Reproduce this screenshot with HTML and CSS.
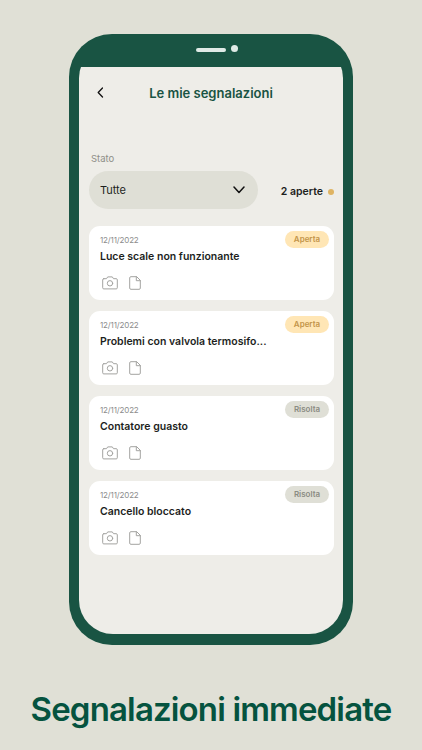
FILE: index.html
```
<!DOCTYPE html>
<html lang="it">
<head>
    <meta charset="UTF-8">
    <meta name="viewport" content="width=device-width, initial-scale=1.0">
    <title>Le mie segnalazioni</title>
    <link rel="stylesheet" href="styles.css">
</head>
<body>
    <svg class="sprite" width="0" height="0">
        <symbol id="camera" viewBox="0 0 16 14">
            <path d="M1.800 2.700h2.700L5.700.9h4.600l1.200 1.800h2.700a1.100 1.100 0 0 1 1.100 1.100v8a1.100 1.100 0 0 1-1.100 1.100H1.800a1.100 1.100 0 0 1-1.100-1.100v-8a1.100 1.100 0 0 1 1.100-1.100z"/>
            <circle cx="8" cy="7.300" r="2.700"/>
        </symbol>
        <symbol id="file" viewBox="0 0 12 14">
            <path d="M7.300.7H1.900A1.200 1.200 0 0 0 .7 1.900v10.200a1.200 1.200 0 0 0 1.200 1.200h8.200a1.200 1.200 0 0 0 1.200-1.200V4.700zM7.300.7v4h4"/>
        </symbol>
    </svg>

    <div class="phone">
        <div class="screen">
            <div class="notch">
                <span class="speaker"></span>
                <span class="lens"></span>
            </div>

            <header class="header">
                <svg class="back" width="7" height="11" viewBox="0 0 7 11"><path d="M5.500 1 1.200 5.500l4.300 4.500"/></svg>
                <h1 class="title">Le mie segnalazioni</h1>
            </header>

            <div class="filter">
                <div class="label">Stato</div>
                <div class="filter-row">
                    <div class="select">
                        <span>Tutte</span>
                        <svg width="12" height="8" viewBox="0 0 12 8"><path d="M1 1l5 5.500L11 1"/></svg>
                    </div>
                    <div class="count"><span class="count-text">2 aperte</span><span class="dot"></span></div>
                </div>
            </div>

            <div class="list">
                <div class="card">
                    <span class="badge open">Aperta</span>
                    <div class="date">12/11/2022</div>
                    <div class="name">Luce scale non funzionante</div>
                    <div class="icons">
                        <svg width="16" height="14"><use href="#camera"/></svg>
                        <svg width="12" height="14"><use href="#file"/></svg>
                    </div>
                </div>
                <div class="card">
                    <span class="badge open">Aperta</span>
                    <div class="date">12/11/2022</div>
                    <div class="name">Problemi con valvola termosifo...</div>
                    <div class="icons">
                        <svg width="16" height="14"><use href="#camera"/></svg>
                        <svg width="12" height="14"><use href="#file"/></svg>
                    </div>
                </div>
                <div class="card">
                    <span class="badge closed">Risolta</span>
                    <div class="date">12/11/2022</div>
                    <div class="name">Contatore guasto</div>
                    <div class="icons">
                        <svg width="16" height="14"><use href="#camera"/></svg>
                        <svg width="12" height="14"><use href="#file"/></svg>
                    </div>
                </div>
                <div class="card">
                    <span class="badge closed">Risolta</span>
                    <div class="date">12/11/2022</div>
                    <div class="name">Cancello bloccato</div>
                    <div class="icons">
                        <svg width="16" height="14"><use href="#camera"/></svg>
                        <svg width="12" height="14"><use href="#file"/></svg>
                    </div>
                </div>
            </div>
        </div>
    </div>

    <h2 class="caption">Segnalazioni immediate</h2>
</body>
</html>
```
FILE: styles.css
```
* {
    box-sizing: border-box;
}
body {
    margin: 0;
    height: 750px;
    padding-top: 34px;
    overflow: hidden;
    background: #e0e0d6;
    font-family: Inter, "Liberation Sans", sans-serif;
    color: #1d1f1d;
}
.sprite {
    display: block;
}
svg {
    display: block;
    fill: none;
    stroke-linecap: round;
    stroke-linejoin: round;
}
.phone {
    width: 284px;
    height: 611px;
    margin: 0 auto;
    padding: 10px;
    border-radius: 43px;
    background: #195443;
}
.screen {
    height: 590px;
    border-radius: 34px;
    overflow: hidden;
    background: linear-gradient(#195443 23px, #eeede8 23px);
}
.notch {
    height: 23px;
    padding-top: 1px;
    display: flex;
    justify-content: center;
    gap: 5px;
}
.speaker {
    width: 30px;
    height: 4px;
    margin: 2.500px 0 0 11px;
    border-radius: 2px;
    background: #dfeae6;
}
.lens {
    width: 7px;
    height: 7px;
    border-radius: 50%;
    background: #dfeae6;
}
.header {
    display: grid;
    grid-template-columns: 18px 1fr 18px;
    align-items: center;
    height: 50px;
}
.back {
    margin-left: 18px;
    stroke: #111;
    stroke-width: 1.300;
}
.title {
    margin: 1px 0 0;
    font-size: 13px;
    line-height: 16px;
    font-weight: 600;
    letter-spacing: 0;
    text-align: center;
    white-space: nowrap;
    color: #195443;
}
.filter {
    padding: 35px 9px 0 10px;
}
.label {
    padding-left: 2px;
    font-size: 9.500px;
    line-height: 14px;
    color: #8f8f89;
}
.filter-row {
    display: flex;
    align-items: center;
    justify-content: space-between;
    margin-top: 5px;
}
.select {
    display: flex;
    align-items: center;
    justify-content: space-between;
    width: 169px;
    height: 38px;
    padding: 0 13px 0 11px;
    border-radius: 19px;
    background: #dfdfd6;
    font-size: 11px;
}
.select svg {
    stroke: #111;
    stroke-width: 1.500;
}
.count {
    display: flex;
    align-items: center;
    gap: 5px;
    padding-top: 3px;
    font-size: 10.500px;
    font-weight: 600;
}
.dot {
    width: 6px;
    height: 6px;
    border-radius: 50%;
    background: #dfb463;
}
.list {
    display: flex;
    flex-direction: column;
    gap: 11px;
    padding: 17px 9px 0 10px;
}
.card {
    position: relative;
    height: 74px;
    padding: 9px 11px;
    border-radius: 11px;
    background: #fff;
}
.date {
    font-size: 8px;
    line-height: 11px;
    letter-spacing: -0.150px;
    color: #8c8c8c;
}
.name {
    margin-top: 3px;
    font-size: 10.500px;
    line-height: 15px;
    font-weight: 600;
    white-space: nowrap;
}
.icons {
    display: flex;
    gap: 11px;
    margin: 12px 0 0 2px;
    stroke: #a3a3a0;
    stroke-width: 1;
}
.badge {
    position: absolute;
    top: 5px;
    right: 5px;
    width: 44px;
    border-radius: 9px;
    font-size: 8px;
    line-height: 17px;
    font-weight: 600;
    text-align: center;
}
.open {
    background: #ffe6b5;
    color: #c3954a;
}
.closed {
    background: #dfdfd6;
    color: #8b8c83;
}
.caption {
    margin: 42px 0 0;
    font-size: 33px;
    line-height: 44px;
    font-weight: 600;
    letter-spacing: -0.850px;
    text-align: center;
    white-space: nowrap;
    color: #05533f;
}
```
